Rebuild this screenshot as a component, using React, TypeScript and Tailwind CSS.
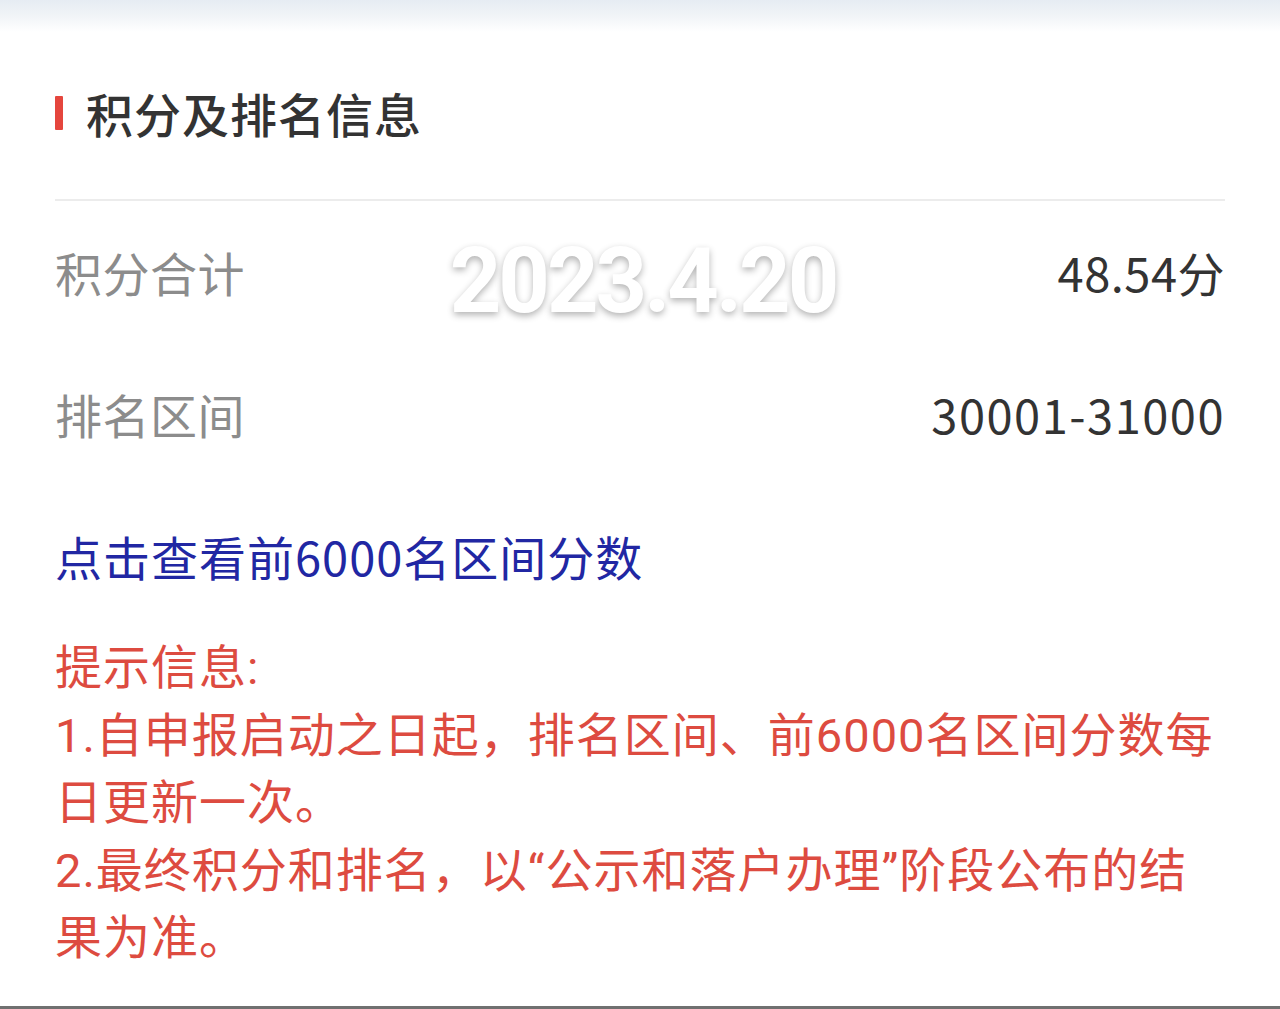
import React from "react";

const CJK = "font-['Noto_Sans_CJK_SC','Noto_Sans',sans-serif]";

export default function App() {
  return (
    <div className={`relative h-[1009px] w-[1280px] overflow-hidden bg-white flex flex-col ${CJK}`}>
      <div className="h-[32px] bg-gradient-to-b from-[#e6ecf3] via-[#f1f4f7] to-white" />
      <div className="px-[55px] flex flex-col">
        <div className="mt-[53px] flex items-center h-[56px]">
          <div className="w-[8px] h-[34px] bg-[#e5463d] rounded-[1px]" />
          <div className="ml-[23px] text-[47px] leading-[56px] text-[#333333] font-medium tracking-[1px]">积分及排名信息</div>
        </div>
        <div className="mt-[58px] h-[2px] bg-[#ececec]" />
        <div className="h-[142px] flex items-center justify-between text-[47px] leading-[56px]">
          <span className="text-[#8c8c8c] tracking-[0.5px]">积分合计</span>
          <span className="text-[#333333] tracking-[0.5px]">48.54分</span>
        </div>
        <div className="h-[142px] flex items-center justify-between text-[47px] leading-[56px]">
          <span className="text-[#8c8c8c] tracking-[0.5px]">排名区间</span>
          <span className="text-[#333333] tracking-[1.5px]">30001-31000</span>
        </div>
        <div className="mt-[43px] text-[47px] leading-[56px] text-[#2127a3] tracking-[1px]">点击查看前6000名区间分数</div>
        <div className="mt-[50px] text-[47px] leading-[67.5px] text-[#dd4b40] tracking-[1px] font-['Roboto','Noto_Sans_CJK_SC',sans-serif]">
          <div>提示信息:</div>
          <div>1.自申报启动之日起，排名区间、前6000名区间分数每日更新一次。</div>
          <div>2.最终积分和排名，以“公示和落户办理”阶段公布的结果为准。</div>
        </div>
      </div>
      <div className="mt-auto h-[3px] bg-[#707070]" />
      <div className="absolute left-0 right-0 top-[237px] flex justify-center pointer-events-none">
        <span className="ml-[6px] font-['Roboto',sans-serif] font-bold text-[90px] leading-[90px] tracking-[-3px] text-white [text-shadow:0_3px_7px_rgba(0,0,0,0.3)]">
          2023.4.20
        </span>
      </div>
    </div>
  );
}
